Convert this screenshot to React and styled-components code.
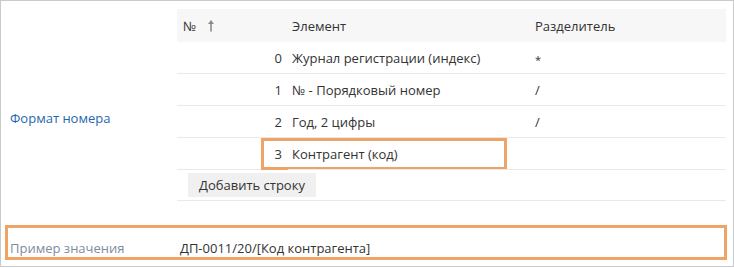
import React from 'react';
import styled, { createGlobalStyle } from 'styled-components';

const GlobalStyle = createGlobalStyle`
  body {
    margin: 0;
    background: #ffffff;
    font-family: 'Open Sans', 'Noto Sans', sans-serif;
    font-size: 13px;
    color: #333333;
  }
`;

const Frame = styled.div`
  box-sizing: border-box;
  width: 734px;
  height: 267px;
  border: 1px solid #cacaca;
  background: #ffffff;
  padding-top: 8px;
`;

const FormRow = styled.div`
  display: grid;
  grid-template-columns: 176px 549px;
`;

const FieldLabel = styled.div`
  padding: 100px 0 0 9px;
  color: #1f67b1;
  line-height: 18px;
`;

const Grid = styled.div`
  display: grid;
  grid-template-columns: 111px 241px 197px;
`;

const HeadCell = styled.div`
  height: 33px;
  display: flex;
  align-items: center;
  gap: 11px;
  background: #f7f7f7;
  padding-left: ${p => (p.first || p.sep ? '6px' : '4px')};
`;

const Row = styled.div`
  display: contents;
`;

const Cell = styled.div`
  position: relative;
  height: 31px;
  display: flex;
  align-items: center;
  border-bottom: 1px solid #e9e9e9;
  justify-content: ${p => (p.num ? 'flex-end' : 'flex-start')};
  padding: ${p => (p.num ? '0 6px 0 0' : p.sep ? '0 0 0 6px' : '0 0 0 4px')};
`;

const Star = styled.span`
  position: relative;
  top: 2px;
  font-size: 11px;
`;

const Highlight = styled.div`
  position: absolute;
  left: 84px;
  top: 0;
  width: 246px;
  height: 32px;
  box-sizing: border-box;
  border: 3px solid #eea466;
  pointer-events: none;
`;

const ButtonRow = styled.div`
  grid-column: 1 / -1;
  height: 30px;
  display: flex;
  align-items: center;
  padding-left: 11px;
  border-bottom: 1px solid #e9e9e9;
`;

const AddButton = styled.button`
  height: 24px;
  padding: 0 11px;
  border: 0;
  background: #f0f0f0;
  color: #333333;
  font-family: inherit;
  font-size: 13px;
  cursor: pointer;
`;

const SampleRow = styled.div`
  box-sizing: border-box;
  margin: 24px 0 0 4px;
  width: 722px;
  height: 35px;
  border: 3px solid #eea466;
  display: grid;
  grid-template-columns: 170px 1fr;
  align-items: end;
  padding: 0 0 0 2px;
  line-height: 18px;
`;

const SampleLabel = styled.div`
  color: #7f8c9c;
`;

const SortArrow = () => (
  <svg width="8" height="13" viewBox="0 0 8 13">
    <path d="M4 1 L7 5 L4.8 5 L4.8 12.5 L3.2 12.5 L3.2 5 L1 5 Z" fill="#8a8a8a" />
  </svg>
);

const rows = [
  { n: 0, el: 'Журнал регистрации (индекс)', sep: '*' },
  { n: 1, el: '№ - Порядковый номер', sep: '/' },
  { n: 2, el: 'Год, 2 цифры', sep: '/' },
  { n: 3, el: 'Контрагент (код)', sep: '', marked: true },
];

export default function App() {
  return (
    <>
      <GlobalStyle />
      <Frame>
        <FormRow>
          <FieldLabel>Формат номера</FieldLabel>
          <Grid>
            <HeadCell first>
              <span>№</span>
              <SortArrow />
            </HeadCell>
            <HeadCell>Элемент</HeadCell>
            <HeadCell sep>Разделитель</HeadCell>
            {rows.map(r => (
              <Row key={r.n}>
                <Cell num>
                  {r.n}
                  {r.marked && <Highlight />}
                </Cell>
                <Cell>{r.el}</Cell>
                <Cell sep>{r.sep === '*' ? <Star>*</Star> : r.sep}</Cell>
              </Row>
            ))}
            <ButtonRow>
              <AddButton>Добавить строку</AddButton>
            </ButtonRow>
          </Grid>
        </FormRow>
        <SampleRow>
          <SampleLabel>Пример значения</SampleLabel>
          <div>ДП-0011/20/[Код контрагента]</div>
        </SampleRow>
      </Frame>
    </>
  );
}
